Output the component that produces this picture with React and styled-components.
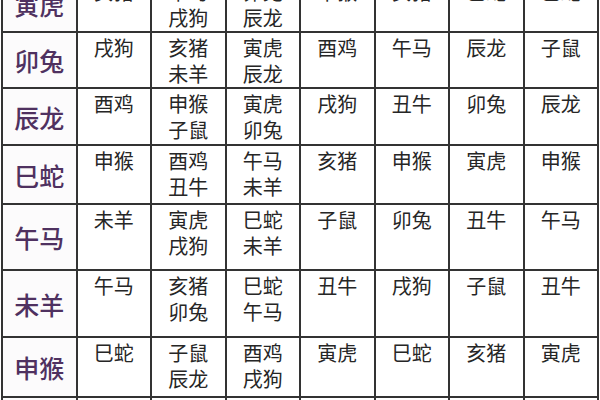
import React from 'react';
import styled, { createGlobalStyle } from 'styled-components';

const rows = [
  { name: '寅虎', h: 56, cells: [['亥猪'], ['午马', '戌狗'], ['卯兔', '辰龙'], ['申猴'], ['亥猪'], ['巳蛇'], ['巳蛇']] },
  { name: '卯兔', h: 56, cells: [['戌狗'], ['亥猪', '未羊'], ['寅虎', '辰龙'], ['酉鸡'], ['午马'], ['辰龙'], ['子鼠']] },
  { name: '辰龙', h: 57, cells: [['酉鸡'], ['申猴', '子鼠'], ['寅虎', '卯兔'], ['戌狗'], ['丑牛'], ['卯兔'], ['辰龙']] },
  { name: '巳蛇', h: 59, cells: [['申猴'], ['酉鸡', '丑牛'], ['午马', '未羊'], ['亥猪'], ['申猴'], ['寅虎'], ['申猴']] },
  { name: '午马', h: 66, cells: [['未羊'], ['寅虎', '戌狗'], ['巳蛇', '未羊'], ['子鼠'], ['卯兔'], ['丑牛'], ['午马']] },
  { name: '未羊', h: 67, cells: [['午马'], ['亥猪', '卯兔'], ['巳蛇', '午马'], ['丑牛'], ['戌狗'], ['子鼠'], ['丑牛']] },
  { name: '申猴', h: 60, cells: [['巳蛇'], ['子鼠', '辰龙'], ['酉鸡', '戌狗'], ['寅虎'], ['巳蛇'], ['亥猪'], ['寅虎']] },
  { name: '', h: 50, cells: [[], [], [], [], [], [], []] },
];

const GlobalStyle = createGlobalStyle`
  html, body {
    margin: 0;
    padding: 0;
    background: #ffffff;
  }
`;

const Page = styled.div`
  width: 600px;
  height: 400px;
  overflow: hidden;
  background: #ffffff;
  font-family: "Noto Sans CJK SC", "Noto Sans", sans-serif;
`;

const Table = styled.table`
  margin: -25px 0 0 1px;
  width: 598px;
  border-collapse: collapse;
  table-layout: fixed;
`;

const HeadCell = styled.th`
  border: 2px solid #333333;
  padding: 0;
  vertical-align: middle;
  text-align: center;
  font-size: 25px;
  font-weight: 500;
  line-height: 30px;
  color: #4f3160;
  background: #fcfbfc;
`;

const Cell = styled.td`
  border: 2px solid #333333;
  padding: 2px 0 0;
  vertical-align: top;
  text-align: center;
  font-size: 20px;
  line-height: 26px;
  color: #262626;
`;

const Line = styled.div`
  white-space: nowrap;
`;

export default function App() {
  return (
    <Page>
      <GlobalStyle />
      <Table>
        <tbody>
          {rows.map((row, i) => (
            <tr key={i} style={{ height: row.h }}>
              <HeadCell>{row.name}</HeadCell>
              {row.cells.map((lines, j) => (
                <Cell key={j}>
                  {lines.map((t, k) => (
                    <Line key={k}>{t}</Line>
                  ))}
                </Cell>
              ))}
            </tr>
          ))}
        </tbody>
      </Table>
    </Page>
  );
}
